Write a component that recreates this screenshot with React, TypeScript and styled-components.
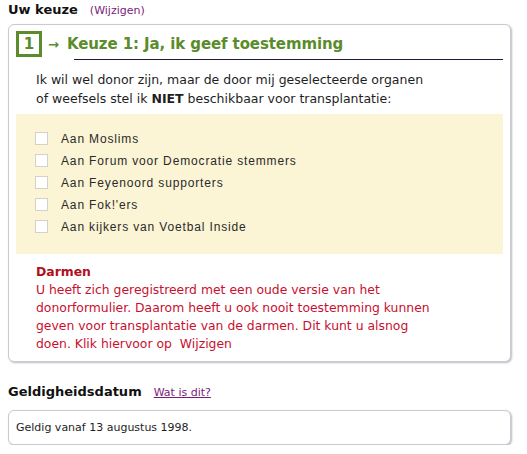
import React from 'react';
import styled, { createGlobalStyle } from 'styled-components';

const GlobalStyle = createGlobalStyle`
  body {
    margin: 0;
    background: #fff;
    font-family: Verdana, "DejaVu Sans", sans-serif;
    color: #1a1a1a;
  }
`;

const Page = styled.div`
  width: 527px;
  padding: 2px 16px 0 8px;
  box-sizing: border-box;
`;

const SectionHead = styled.div<{ $gap?: number }>`
  display: flex;
  align-items: baseline;
  gap: 12px;
  height: 22px;
  margin-bottom: ${({ $gap }) => $gap ?? 0}px;
`;

const HeadTitle = styled.h2`
  margin: 0;
  font-size: 13px;
  font-weight: bold;
  color: #111;
`;

const HeadLink = styled.a<{ $underline?: boolean }>`
  font-size: 11px;
  color: #7a1b7a;
  text-decoration: ${({ $underline }) => ($underline ? 'underline' : 'none')};
`;

const Card = styled.div<{ $pad: string }>`
  border: 1px solid #c9c9d2;
  border-radius: 6px;
  box-shadow: 1px 1px 2px rgba(60, 60, 80, 0.35);
  background: #fff;
  padding: ${({ $pad }) => $pad};
`;

const ChoiceHeader = styled.div`
  display: flex;
  align-items: center;
  height: 26px;
`;

const NumberBox = styled.div`
  width: 20px;
  height: 20px;
  border: 3px solid #5a8c2b;
  color: #5a8c2b;
  font-size: 15px;
  font-weight: bold;
  display: flex;
  align-items: center;
  justify-content: center;
`;

const Arrow = styled.span`
  color: #5a8c2b;
  font-size: 13px;
  font-weight: bold;
  margin: 0 8px 0 6px;
`;

const ChoiceTitle = styled.h3`
  margin: 0;
  font-size: 15px;
  font-weight: bold;
  color: #5a8c2b;
  letter-spacing: -0.1px;
`;

const Rule = styled.div`
  height: 1px;
  background: #1c1c3a;
  margin: 2px 0 0 58px;
`;

const Intro = styled.p`
  margin: 10px 0 0 20px;
  font-size: 12.5px;
  line-height: 19px;
  color: #1e1e1e;
`;

const OptionBox = styled.div`
  background: #fbf4d5;
  margin-top: 6px;
  padding: 18px 0 21px 19px;
  display: flex;
  flex-direction: column;
  gap: 9px;
`;

const Option = styled.label`
  display: flex;
  align-items: center;
  height: 13px;
  font-family: Arial, "Liberation Sans", sans-serif;
  font-size: 12px;
  letter-spacing: 0.85px;
  color: #2a2a2a;
`;

const Box = styled.span`
  width: 11px;
  height: 11px;
  border: 1px solid #d4d2c8;
  background: #fff;
  margin-right: 13px;
`;

const Notice = styled.div`
  margin: 9px 0 0 20px;
  color: #c8102e;
  font-size: 12.4px;
  line-height: 18px;
`;

const NoticeTitle = styled.div`
  font-weight: bold;
  color: #b0101e;
`;

const DateSection = styled.div`
  margin-top: 22px;
`;

const DateText = styled.div`
  font-size: 11px;
  color: #1e1e1e;
  line-height: 14px;
`;

const options = [
  'Aan Moslims',
  'Aan Forum voor Democratie stemmers',
  'Aan Feyenoord supporters',
  "Aan Fok!'ers",
  'Aan kijkers van Voetbal Inside',
];

export default function App() {
  return (
    <Page>
      <GlobalStyle />
      <SectionHead>
        <HeadTitle>Uw keuze</HeadTitle>
        <HeadLink href="#">(Wijzigen)</HeadLink>
      </SectionHead>
      <Card $pad="6px 7px 8px 7px">
        <ChoiceHeader>
          <NumberBox>1</NumberBox>
          <Arrow>→</Arrow>
          <ChoiceTitle>Keuze 1: Ja, ik geef toestemming</ChoiceTitle>
        </ChoiceHeader>
        <Rule />
        <Intro>
          Ik wil wel donor zijn, maar de door mij geselecteerde organen
          <br />
          of weefsels stel ik <b>NIET</b> beschikbaar voor transplantatie:
        </Intro>
        <OptionBox>
          {options.map((o) => (
            <Option key={o}>
              <Box />
              {o}
            </Option>
          ))}
        </OptionBox>
        <Notice>
          <NoticeTitle>Darmen</NoticeTitle>
          U heeft zich geregistreerd met een oude versie van het
          <br />
          donorformulier. Daarom heeft u ook nooit toestemming kunnen
          <br />
          geven voor transplantatie van de darmen. Dit kunt u alsnog
          <br />
          doen. Klik hiervoor op&nbsp; Wijzigen
        </Notice>
      </Card>
      <DateSection>
        <SectionHead $gap={4}>
          <HeadTitle>Geldigheidsdatum</HeadTitle>
          <HeadLink href="#" $underline>
            Wat is dit?
          </HeadLink>
        </SectionHead>
        <Card $pad="10px 7px 9px 7px">
          <DateText>Geldig vanaf 13 augustus 1998.</DateText>
        </Card>
      </DateSection>
    </Page>
  );
}
